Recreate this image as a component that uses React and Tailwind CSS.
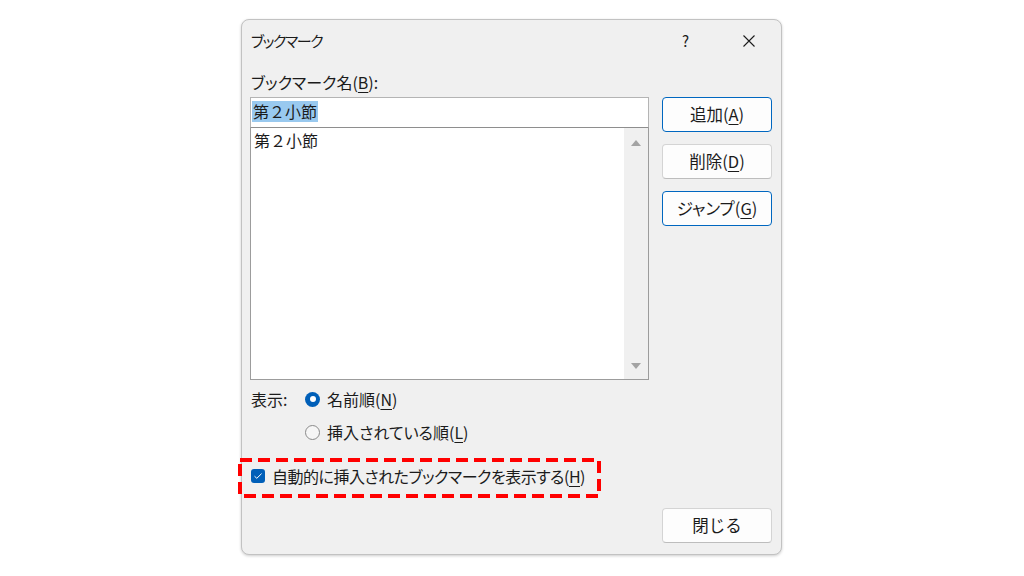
import React from "react";

const palt = "[font-feature-settings:'palt']";

function Btn({ children, primary }) {
  return (
    <div
      className={
        "h-[35px] w-[110px] rounded-[4px] flex items-center justify-center text-[16.5px] leading-none bg-[#fdfdfd] border " +
        (primary ? "border-[#0067c0]" : "border-[#d4d4d4] border-b-[#bdbdbd]")
      }
    >
      {children}
    </div>
  );
}

const U = ({ children }) => (
  <span className="underline underline-offset-[3px] decoration-[1px]">{children}</span>
);

export default function App() {
  return (
    <div className="w-[1024px] h-[576px] bg-white pl-[241px] pt-[19px] font-['Noto_Sans_CJK_JP','Noto_Sans',sans-serif] text-[#1b1b1b]">
      <div className="w-[541px] h-[536px] rounded-[8px] border border-[#c2c2c2] bg-[#f0f0f0] flex flex-col shadow-[0_1px_3px_rgba(0,0,0,0.2)]">
        {/* title bar */}
        <div className="h-[41px] flex items-center pl-[9px] pr-[26px]">
          <span className={"text-[15px] leading-none tracking-[-1.5px] " + palt}>ブックマーク</span>
          <span className="ml-auto text-[15px] leading-none mr-[54px]">?</span>
          <svg width="12" height="12" viewBox="0 0 12 12">
            <path d="M0.5 0.5 L11.5 11.5 M11.5 0.5 L0.5 11.5" stroke="#1b1b1b" strokeWidth="1.1" fill="none" />
          </svg>
        </div>

        <div className="flex flex-1 pl-[8px] pr-[9px] pb-[11px] gap-[13px]">
          {/* left column */}
          <div className="w-[399px] flex flex-col">
            <div className={"pt-[9px] h-[33px] pl-[1px] text-[16px] leading-[24px] mb-[3px] " + palt}>
              ブックマーク名(<U>B</U>):
            </div>
            <div className="h-[31px] bg-white border border-[#b4b4b4] border-b-[#8e8e8e] pt-[1px] pl-[1px]">
              <span className="inline-block bg-[#99c9ef] text-[16px] leading-[21px] px-[1px]">第２小節</span>
            </div>
            <div className="h-[252px] bg-white border border-t-0 border-[#9c9c9c] flex">
              <div className="flex-1 pl-[3px] pt-[1px] text-[16px] leading-[22px]">第２小節</div>
              <div className="w-[24px] bg-[#f0f0f0] flex flex-col items-center justify-between pt-[12px] pb-[10px]">
                <svg width="10" height="6" viewBox="0 0 10 6">
                  <path d="M5 0 L10 6 L0 6 Z" fill="#a3a3a3" />
                </svg>
                <svg width="10" height="6" viewBox="0 0 10 6">
                  <path d="M0 0 L10 0 L5 6 Z" fill="#a3a3a3" />
                </svg>
              </div>
            </div>

            {/* radios */}
            <div className="mt-[8px] h-[22px] flex items-center pl-[1px]">
              <span className="w-[54px] text-[16px] leading-[22px]">表示:</span>
              <span className="w-[15px] h-[15px] rounded-full bg-[#005fb8] flex items-center justify-center">
                <span className="w-[6px] h-[6px] rounded-full bg-white" />
              </span>
              <span className="ml-[7px] text-[16px] leading-[22px]">
                名前順(<U>N</U>)
              </span>
            </div>
            <div className="mt-[11px] h-[22px] flex items-center pl-[55px]">
              <span className="w-[15px] h-[15px] rounded-full border border-[#8a8a8a] bg-[#f6f6f6]" />
              <span className={"ml-[7px] text-[16px] leading-[22px] " + palt}>
                挿入されている順(<U>L</U>)
              </span>
            </div>

            {/* checkbox */}
            <div className="relative mt-[22px] h-[22px] flex items-center pl-[1px]">
              <span className="w-[14px] h-[14px] rounded-[3px] bg-[#005fb8] flex items-center justify-center">
                <svg width="10" height="8" viewBox="0 0 10 8">
                  <path d="M1.5 4.2 L3.8 6.3 L8.6 1.6" stroke="white" strokeWidth="1" fill="none" />
                </svg>
              </span>
              <span className={"ml-[7px] text-[16px] leading-[22px] tracking-[-0.5px] " + palt}>
                自動的に挿入されたブックマークを表示する(<U>H</U>)
              </span>
              <svg
                className="absolute left-[-12px] top-[-7px]"
                width="363"
                height="40"
                viewBox="0 0 363 40"
              >
                <rect x="2" y="2" width="359" height="36" fill="none" stroke="#ff0000" strokeWidth="4" strokeDasharray="12 6" />
              </svg>
            </div>
          </div>

          {/* right column */}
          <div className="flex flex-col pt-[36px] gap-[12px]">
            <Btn primary>
              追加(<U>A</U>)
            </Btn>
            <Btn>
              削除(<U>D</U>)
            </Btn>
            <Btn primary>
              <span className={palt}>
                ジャンプ(<U>G</U>)
              </span>
            </Btn>
            <div className="mt-auto">
              <Btn>閉じる</Btn>
            </div>
          </div>
        </div>
      </div>
    </div>
  );
}
